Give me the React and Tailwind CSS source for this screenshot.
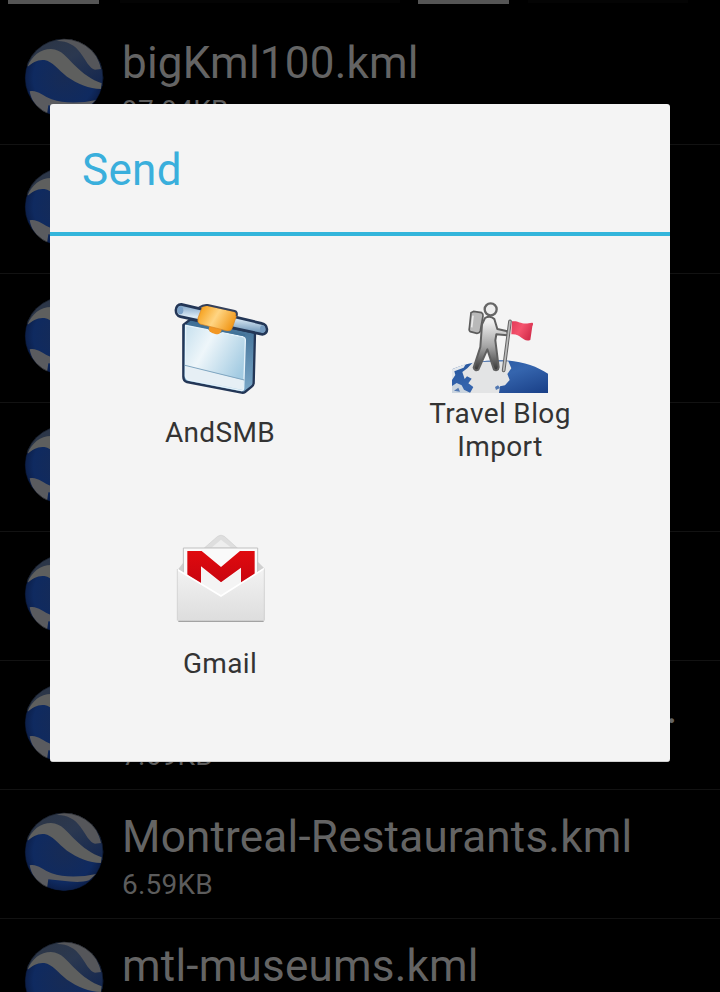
import React from 'react';

const files = [
  { name: 'bigKml100.kml', size: '97.94KB' },
  {},
  {},
  {},
  {},
  { clipped: true, size: '7.69KB' },
  { name: 'Montreal-Restaurants.kml', size: '6.59KB' },
  { name: 'mtl-museums.kml' },
];

function Globe() {
  return (
    <svg viewBox="43 38 240 240" className="h-20 w-20 shrink-0">
      <defs>
        <radialGradient id="sea" cx="0.5" cy="0.5" r="0.52">
          <stop offset="0" stopColor="#172b55" />
          <stop offset="0.75" stopColor="#0f2a60" />
          <stop offset="1" stopColor="#0b1c44" />
        </radialGradient>
        <linearGradient id="sky" x1="0" y1="0" x2="1" y2="1">
          <stop offset="0" stopColor="#2c3440" />
          <stop offset="0.5" stopColor="#2b3850" />
          <stop offset="1" stopColor="#10244f" />
        </linearGradient>
        <clipPath id="ball"><circle cx="163" cy="158" r="118" /></clipPath>
      </defs>
      <g clipPath="url(#ball)">
        <circle cx="163" cy="158" r="118" fill="url(#sea)" />
        <path d="M40 120V30H290V185C240 175 200 140 160 105C120 80 90 95 55 122Z" fill="url(#sky)" />
        <path d="M140 47C172 46 196 60 212 82C228 104 240 130 256 133L274 131C266 92 246 66 222 52C196 38 165 36 140 47Z" fill="#55565a" />
        <path d="M236 60C256 78 272 102 277 132L284 130V60Z" fill="#1c2940" />
        <path d="M54 124C66 92 92 71 124 71C156 72 172 98 194 119C220 145 246 163 276 174L274 191C238 190 204 176 172 154C146 134 128 108 104 104C84 102 68 112 54 124Z" fill="#5e5f5e" />
        <path d="M60 198C84 193 98 212 126 222C164 235 212 234 260 224L238 243C206 254 155 243 116 240L112 268C84 252 64 225 60 198Z" fill="#5a5b5f" />
      </g>
      <circle cx="163" cy="158" r="117" fill="none" stroke="#000" strokeOpacity="0.4" strokeWidth="3" />
    </svg>
  );
}

function AndSmbIcon() {
  return (
    <svg viewBox="21 21 288 288" className="h-24 w-24 overflow-visible">
      <defs>
        <linearGradient id="page" x1="0" y1="0" x2="1" y2="0.6">
          <stop offset="0" stopColor="#c6e0ee" />
          <stop offset="0.4" stopColor="#eef6fa" />
          <stop offset="1" stopColor="#a3cbe2" />
        </linearGradient>
        <linearGradient id="side" x1="0" y1="0" x2="0" y2="1">
          <stop offset="0" stopColor="#3d6c93" />
          <stop offset="1" stopColor="#7ba8c8" />
        </linearGradient>
        <linearGradient id="clamp" x1="0" y1="0.3" x2="1" y2="0.7">
          <stop offset="0" stopColor="#f6a01b" />
          <stop offset="0.45" stopColor="#ffd583" />
          <stop offset="1" stopColor="#f0920f" />
        </linearGradient>
        <linearGradient id="rod" x1="0.1" y1="0" x2="0" y2="1">
          <stop offset="0" stopColor="#7aa0c4" />
          <stop offset="0.4" stopColor="#dbeaf5" />
          <stop offset="1" stopColor="#4c7ba5" />
        </linearGradient>
      </defs>
      <path d="M55 105L76 88L270 128L266 280Q265 286 260 290L240 306Q236 309 230 308L66 276Q55 273 55 260Z" fill="url(#side)" stroke="#233656" strokeWidth="7" strokeLinejoin="round" />
      <path d="M62 106L232 140Q242 143 241 152L236 295Q235 303 227 301L70 270Q62 267 61 257Z" fill="url(#page)" stroke="#e6f3fb" strokeWidth="4" />
      <path d="M62 228L236 270L234 300L70 268L62 257Z" fill="#e6eff5" />
      <path d="M60 226L238 270" stroke="#7fa5c0" strokeWidth="3" />
      <path d="M82 102L130 112Q145 135 174 122L240 136" fill="none" stroke="#417298" strokeWidth="7" />
      <path d="M49 43L290 100C309 104 312 132 292 133L46 80C27 76 29 42 49 43Z" fill="url(#rod)" stroke="#233656" strokeWidth="8" />
      <ellipse cx="46" cy="61" rx="9" ry="12" fill="#7ba1c8" />
      <ellipse cx="293" cy="117" rx="8" ry="11" fill="#7399bf" />
      <path d="M137 107L168 115Q173 124 163 131Q147 137 134 124Q127 113 137 107Z" fill="#f29724" />
      <path d="M112 50Q117 45 127 47L207 64Q217 69 213 82L201 116Q197 125 184 122L105 102Q96 98 99 84Z" fill="url(#clamp)" stroke="#d98521" strokeWidth="2" />
      <path d="M102 53Q115 43 128 45L209 63Q218 66 215 78" fill="none" stroke="#34405a" strokeWidth="6" />
    </svg>
  );
}

function TravelIcon() {
  return (
    <svg viewBox="36 21 288 288" className="h-24 w-24">
      <defs>
        <linearGradient id="ocean" x1="0" y1="0" x2="1" y2="1">
          <stop offset="0" stopColor="#24549b" />
          <stop offset="0.5" stopColor="#3565ae" />
          <stop offset="1" stopColor="#193f87" />
        </linearGradient>
        <linearGradient id="man" x1="0" y1="0" x2="0" y2="1">
          <stop offset="0.1" stopColor="#eeeeee" />
          <stop offset="0.55" stopColor="#a5a5a5" />
          <stop offset="1" stopColor="#353535" />
        </linearGradient>
        <linearGradient id="flag" x1="0" y1="0" x2="1" y2="0.5">
          <stop offset="0" stopColor="#e23b58" />
          <stop offset="0.5" stopColor="#f4536d" />
          <stop offset="1" stopColor="#d52f4d" />
        </linearGradient>
      </defs>
      <path d="M36 238C80 218 140 209 190 211C245 213 290 229 324 251V309H36Z" fill="url(#ocean)" />
      <path d="M36 238L78 221L71 233L43 244L46 255L36 270Z" fill="#e4e8ec" />
      <path d="M67 246L82 235L100 216L205 214L214 235L202 252L209 270L195 286L180 289L177 309H90L100 291L85 280L95 266L81 259L74 267Z" fill="#e3e4e5" />
      <path d="M36 288L50 279L65 286L72 299L92 309H36Z" fill="#cbd5df" />
      <path d="M42 302L60 305L55 293ZM165 291L174 286L180 294L168 300Z" fill="#5278b2" />
      <path d="M93 68L101 64L125 68Q130 71 129 78L121 122Q119 130 111 130L91 125Q86 122 88 115Z" fill="#b9b9b9" stroke="#5c5c5c" strokeWidth="5" />
      <path d="M99 77L95 112" stroke="#e9e9e9" strokeWidth="5" />
      <circle cx="152" cy="58" r="18" fill="#eeeeee" stroke="#666" strokeWidth="7" />
      <path d="M135 84Q151 75 163 87L172 117L199 123Q207 127 201 136L169 133L166 151L176 231Q174 245 162 239L142 178L115 239Q105 245 101 233L121 171L126 103Z" fill="url(#man)" stroke="#606060" strokeWidth="6" strokeLinejoin="round" />
      <path d="M210 94L191 241" stroke="#646464" strokeWidth="11" strokeLinecap="round" />
      <path d="M210 94L191 241" stroke="#bbb" strokeWidth="5" strokeLinecap="round" />
      <path d="M216 94C238 91 242 106 276 98C280 97 280 103 277 109L271 150C248 159 245 130 214 133Z" fill="url(#flag)" />
    </svg>
  );
}

function GmailIcon() {
  return (
    <svg viewBox="21 9 288 288" className="h-24 w-24 overflow-visible">
      <defs>
        <linearGradient id="env" x1="0" y1="0" x2="0" y2="1">
          <stop offset="0" stopColor="#f3f3f3" />
          <stop offset="1" stopColor="#dddddd" />
        </linearGradient>
        <linearGradient id="red" x1="0" y1="0" x2="0" y2="1">
          <stop offset="0" stopColor="#e00a0e" />
          <stop offset="1" stopColor="#c60510" />
        </linearGradient>
      </defs>
      <path d="M118 69L158 34Q168 27 178 34L217 69Z" fill="#dedede" stroke="#d0d0d0" strokeWidth="2" />
      <path d="M141 67L168 44L197 67Z" fill="#eeeeee" />
      <path d="M38 134L56 112H280L298 130L270 150H60Z" fill="#d0d0d0" />
      <path d="M55 69H278V144L168 216L55 144Z" fill="#fafafa" stroke="#c0c0c0" strokeWidth="3" />
      <path d="M67 78H110L168 126L225 78H269V185H228V128L168 172L108 124V185H67Z" fill="url(#red)" />
      <path d="M108 128L168 174L228 132V180L168 213L108 180Z" fill="#f4f4f4" />
      <path d="M37 132L168 213L299 128V283Q299 289 293 289H43Q37 289 37 283Z" fill="url(#env)" />
      <path d="M38 134L168 213L298 130" fill="none" stroke="#fff" strokeWidth="5" />
      <path d="M40 289H296" stroke="#a3a3a3" strokeWidth="4" />
      <path d="M37 132V287M298 130V287" stroke="#c9c9c9" strokeWidth="2" />
    </svg>
  );
}

function Target({ icon, twoLines, children }) {
  return (
    <div className="flex h-[231px] flex-col items-center">
      {icon}
      <div
        className={`flex h-[66px] w-[160px] items-center justify-center text-center text-[28px] leading-[33px] tracking-[0.35px] text-[#333333] ${twoLines ? 'mt-1' : 'mt-1.5'}`}
      >
        {children}
      </div>
    </div>
  );
}

export default function App() {
  return (
    <div className="relative h-[992px] w-[720px] overflow-hidden bg-black font-['Roboto',sans-serif]">
      <div className="flex h-4 items-start pl-2">
        <div className="h-1 w-[91px] bg-[#555555]" />
        <div className="ml-[21px] h-[3px] w-[280px] bg-[#040404]" />
        <div className="ml-[18px] h-1 w-[91px] bg-[#555555]" />
        <div className="ml-[19px] h-[3px] w-[160px] bg-[#040404]" />
      </div>
      {files.map((file, i) => (
        <div key={i} className="flex h-[129px] border-b border-[#121212] pl-6 pt-[22px]">
          <Globe />
          <div className="-mt-px ml-[18px] flex flex-col whitespace-nowrap text-[#646464]">
            <div className="h-[52px] text-[44px] leading-[52px] tracking-[0.22px]">
              {file.clipped ? <span className="pl-[544px]">.</span> : file.name}
            </div>
            <div className="mt-[5px] text-[28px] leading-[33px] tracking-[0.2px] text-[#5c5c5c]">{file.size}</div>
          </div>
        </div>
      ))}

      <div className="absolute left-[50px] top-[104px] flex h-[658px] w-[620px] flex-col rounded-[3px] border-b border-[#d0d0d0] bg-[#f4f4f4]">
        <div className="flex h-[132px] items-center border-b-4 border-[#33b5db] pl-8 pt-1 text-[44px] leading-[52px] tracking-[0.3px] text-[#3aafdc]">
          Send
        </div>
        <div className="grid grid-cols-2 px-[30px] pt-[61px]">
          <Target icon={<AndSmbIcon />}>AndSMB</Target>
          <Target icon={<TravelIcon />} twoLines>Travel Blog Import</Target>
          <Target icon={<GmailIcon />}>Gmail</Target>
        </div>
      </div>
    </div>
  );
}
